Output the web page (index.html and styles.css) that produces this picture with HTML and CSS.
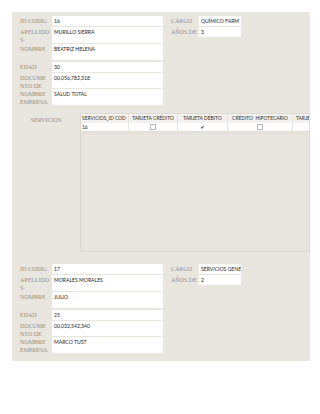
FILE: index.html
```
<!DOCTYPE html>
<html>
<head>
<meta charset="utf-8">
<link rel="stylesheet" href="styles.css">
</head>
<body>
<div class="page">
  <section class="record first">
    <div class="top">
      <div class="fields">
        <div class="row h10"><div class="lbl">ID CODIG</div><div class="inp">16</div></div>
        <div class="row h16"><div class="lbl">APELLIDO<wbr>S</div><div class="inp">MURILLO SIERRA</div></div>
        <div class="row h16"><div class="lbl">NOMBRE</div><div class="inp">BEATRIZ HELENA</div></div>
        <div class="row h10 gap"><div class="lbl">EDAD</div><div class="inp">30</div></div>
        <div class="row h15"><div class="lbl">DOCUME<wbr>NTO DE</div><div class="inp">00,056,782,318</div></div>
        <div class="row h16"><div class="lbl">NOMBRE EMPRESA</div><div class="inp">SALUD TOTAL</div></div>
      </div>
      <div class="side">
        <div class="row h10"><div class="lbl wide">CARGO</div><div class="inp small">QUÍMICO FARM</div></div>
        <div class="row h10"><div class="lbl wide">AÑOS DE</div><div class="inp small">3</div></div>
      </div>
    </div>
    <div class="services">
      <div class="svc-lbl">SERVICIOS</div>
      <div class="sub">
        <div class="grid head">
          <div class="c c1">SERVICIOS_ID COD</div>
          <div class="c c2">TARJETA CRÉDITO</div>
          <div class="c c3">TARJETA DÉBITO</div>
          <div class="c c4">CRÉDITO&nbsp; HIPOTECARIO</div>
          <div class="c c5">TARJE</div>
        </div>
        <div class="grid data">
          <div class="c c1">16</div>
          <div class="c c2 ctr"><span class="box"></span></div>
          <div class="c c3 ctr"><span class="tick">✔</span></div>
          <div class="c c4 ctr"><span class="box"></span></div>
          <div class="c c5"></div>
        </div>
        <div class="sub-body"></div>
      </div>
    </div>
  </section>
  <section class="record second">
    <div class="top">
      <div class="fields">
        <div class="row h10"><div class="lbl">ID CODIG</div><div class="inp">17</div></div>
        <div class="row h16"><div class="lbl">APELLIDO<wbr>S</div><div class="inp">MORALES MORALES</div></div>
        <div class="row h16"><div class="lbl">NOMBRE</div><div class="inp">JULIO</div></div>
        <div class="row h10 gap"><div class="lbl">EDAD</div><div class="inp">25</div></div>
        <div class="row h15"><div class="lbl">DOCUME<wbr>NTO DE</div><div class="inp">00,032,542,340</div></div>
        <div class="row h16"><div class="lbl">NOMBRE EMPRESA</div><div class="inp">MARCO TUST</div></div>
      </div>
      <div class="side">
        <div class="row h10"><div class="lbl wide">CARGO</div><div class="inp small">SERVICIOS GENE</div></div>
        <div class="row h10"><div class="lbl wide">AÑOS DE</div><div class="inp small">2</div></div>
      </div>
    </div>
  </section>
</div>
</body>
</html>
```
FILE: styles.css
```
html, body {
  margin: 0;
  padding: 0;
  background: #ffffff;
}
.page {
  padding: 12px 10px 0 12px;
  width: 298px;
}
.record {
  background: #e9e5df;
}
.record.first {
  padding: 4px 0 5px 8px;
  height: 237px;
}
.record.second {
  padding: 6px 0 8px 8px;
}
.top {
  display: flex;
  gap: 8px;
}
.fields {
  display: flex;
  flex-direction: column;
  gap: 1px;
  width: 143px;
}
.side {
  display: flex;
  flex-direction: column;
  gap: 1px;
}
.row {
  display: flex;
}
.h10 { height: 10px; }
.h15 { height: 15px; }
.h16 { height: 16px; }
.gap { margin-top: 1px; }
.lbl {
  width: 32px;
  flex: none;
  font-family: "Liberation Serif", serif;
  font-size: 6px;
  line-height: 8px;
  color: #958f88;
  padding-top: 1px;
  box-sizing: border-box;
}
.lbl.wide {
  width: 28px;
}
.inp {
  flex: 1;
  background: #ffffff;
  font-family: Lato, "Liberation Sans", sans-serif;
  font-size: 5.1px;
  line-height: 9px;
  color: #1e1e1e;
  padding: 1px 0 0 2px;
  box-sizing: border-box;
  white-space: nowrap;
  overflow: hidden;
}
.inp.small {
  width: 42px;
  flex: none;
}
.services {
  display: flex;
  margin-top: 8px;
}
.svc-lbl {
  width: 60px;
  flex: none;
  font-family: "Liberation Serif", serif;
  font-size: 6px;
  color: #958f88;
  text-align: center;
  padding-top: 4px;
  padding-right: 8px;
  box-sizing: border-box;
}
.sub {
  width: 230px;
  height: 139px;
  overflow: hidden;
  display: flex;
  flex-direction: column;
  border: 1px solid #dcd8d2;
  box-sizing: border-box;
}
.grid {
  display: grid;
  grid-template-columns: 48px 49px 50px 65px 60px;
  width: 272px;
}
.head {
  background: #f3f1ee;
  height: 9px;
}
.data {
  background: #ffffff;
  height: 8px;
  border-bottom: 1px solid #dedad4;
}
.c {
  font-family: Lato, "Liberation Sans", sans-serif;
  font-size: 4.9px;
  line-height: 8px;
  color: #2a2a2a;
  padding-left: 1px;
  white-space: nowrap;
  overflow: hidden;
  border-right: 1px solid #e6e3de;
}
.head .c {
  text-align: center;
  padding-left: 0;
}
.head .c1 {
  text-align: left;
  padding-left: 1px;
}
.head .c5 {
  text-align: left;
  padding-left: 3px;
}
.ctr {
  display: flex;
  justify-content: center;
  align-items: center;
  padding-left: 0;
}
.box {
  width: 4px;
  height: 4px;
  border: 1px solid #b9b6b1;
  background: #fff;
}
.tick {
  font-family: "DejaVu Sans", sans-serif;
  font-size: 5px;
  color: #111;
  line-height: 8px;
}
.sub-body {
  flex: 1;
  border: 1px solid #e2ded8;
  margin: 1px 2px 1px 0;
}
```
